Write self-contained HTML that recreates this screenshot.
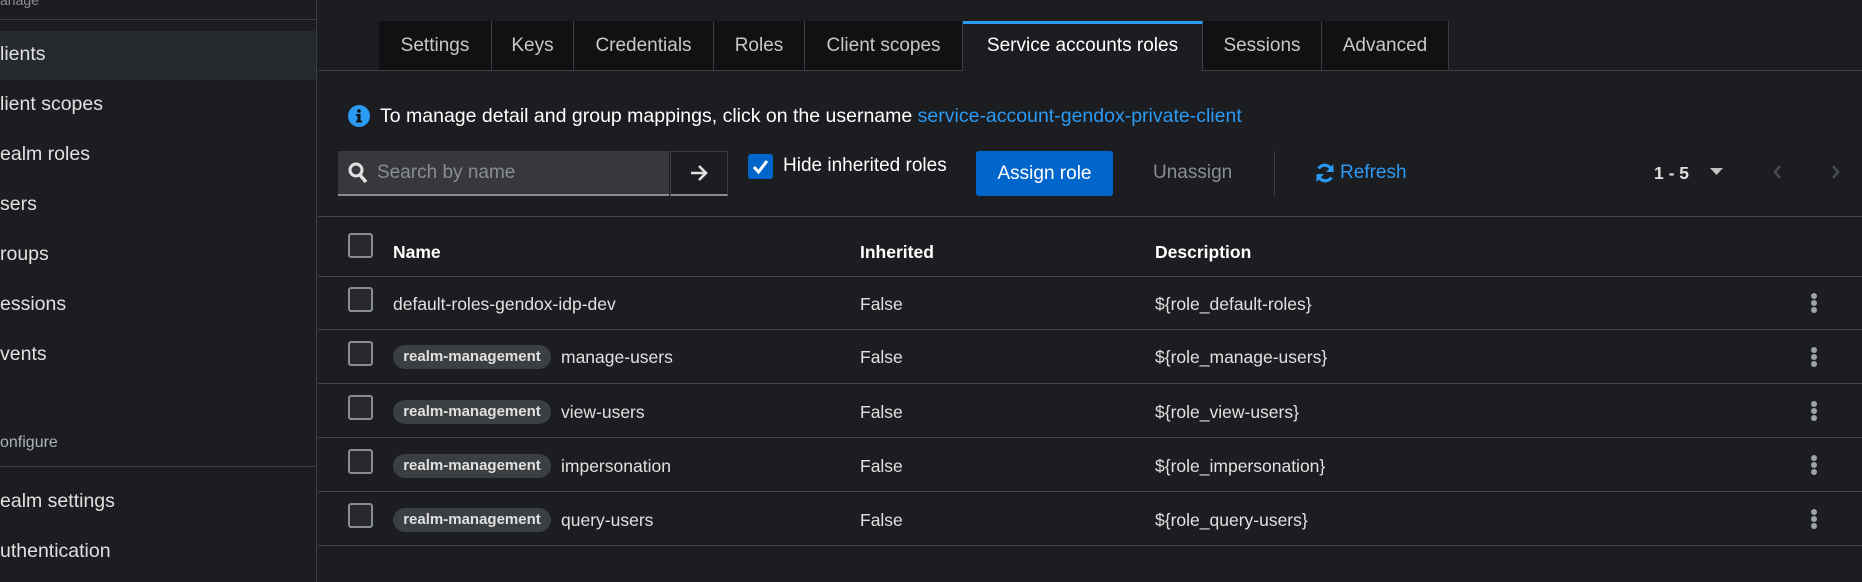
<!DOCTYPE html>
<html><head><meta charset="utf-8"><style>
*{box-sizing:border-box;margin:0;padding:0}
body{width:1862px;height:582px;background:#1b1d21;color:#e0e0e0;font-family:"Liberation Sans",sans-serif;position:relative;overflow:hidden}
.a{position:absolute;white-space:nowrap}
.side{position:absolute;left:0;top:0;width:317px;height:582px;background:#1b1d21;border-right:1px solid #3c3f42}
.nav{position:absolute;left:0;font-size:19.5px;color:#e0e0e0}
.hl{position:absolute;left:0;width:316px;height:1px;background:#3c3f42}
.tab{position:absolute;top:21px;height:49px;background:#0f1113;border-right:1px solid #3c3f42;font-size:19px;color:#c8c8c8;text-align:center;line-height:49px}
.cb{position:absolute;width:25px;height:25px;border:2px solid #8a8d90;border-radius:3px;background:#26282d}
.line{position:absolute;left:318px;right:0;height:1px;background:#444548}
.td{position:absolute;font-size:17.5px;color:#e0e0e0}
.chip{position:absolute;left:393px;height:24px;width:158px;text-align:center;border-radius:12px;background:#3c3f42;font-size:15px;font-weight:bold;color:#e0e0e0;line-height:24px}
.keb{position:absolute;left:1811px;width:6px}
.keb i{display:block;width:6px;height:6px;border-radius:3px;background:#a0a3a6;margin-bottom:1px}
</style></head><body>
<div class="side">
<div class="a" style="left:0;top:-8px;font-size:14px;color:#8a8d90">anage</div>
<div class="hl" style="top:19px"></div>
<div style="position:absolute;left:0;top:31px;width:316px;height:49px;background:#26292d"></div>
<div class="nav" style="top:43px">lients</div>
<div class="nav" style="top:93px">lient scopes</div>
<div class="nav" style="top:143px">ealm roles</div>
<div class="nav" style="top:193px">sers</div>
<div class="nav" style="top:243px">roups</div>
<div class="nav" style="top:293px">essions</div>
<div class="nav" style="top:343px">vents</div>
<div class="nav" style="top:434px;font-size:16px;color:#b0b3b6">onfigure</div>
<div class="hl" style="top:466px"></div>
<div class="nav" style="top:490px">ealm settings</div>
<div class="nav" style="top:540px">uthentication</div>
</div>

<div class="tab" style="left:379px;width:113px;border-left:0">Settings</div>
<div class="tab" style="left:492px;width:82px">Keys</div>
<div class="tab" style="left:574px;width:140px">Credentials</div>
<div class="tab" style="left:714px;width:91px">Roles</div>
<div class="tab" style="left:805px;width:158px">Client scopes</div>
<div class="tab" style="left:963px;width:240px;background:#1b1d21;color:#fff;border-top:3px solid #2b9af3;line-height:43px;height:50px;z-index:2">Service accounts roles</div>
<div class="tab" style="left:1203px;width:119px">Sessions</div>
<div class="tab" style="left:1322px;width:127px">Advanced</div>
<div class="line" style="top:70px;background:#3c3f42"></div>

<svg class="a" style="left:348px;top:105px" width="22" height="22" viewBox="0 0 22 22"><circle cx="11" cy="11" r="11" fill="#2b9af3"/><circle cx="11" cy="6" r="1.8" fill="#111"/><rect x="9.5" y="9" width="3" height="8" fill="#111"/><rect x="8" y="9" width="4" height="2" fill="#111"/><rect x="8" y="15.5" width="6" height="2" fill="#111"/></svg>
<div class="a" style="left:380px;top:105px;font-size:19.5px;color:#fff">To manage detail and group mappings, click on the username <span style="color:#2b9af3">service-account-gendox-private-client</span></div>

<div style="position:absolute;left:338px;top:151px;width:331px;height:45px;background:#36383c;border-bottom:2px solid #8a8d90"></div>
<svg class="a" style="left:348px;top:162px" width="20" height="22" viewBox="0 0 20 22"><circle cx="8" cy="8" r="6" fill="none" stroke="#e0e0e0" stroke-width="3"/><line x1="12" y1="13" x2="18" y2="20" stroke="#e0e0e0" stroke-width="3.5"/></svg>
<div class="a" style="left:377px;top:162px;font-size:19px;color:#8a8d90">Search by name</div>
<div style="position:absolute;left:670px;top:151px;width:58px;height:45px;background:#1b1d21;border:1px solid #3c3f42;border-bottom:2px solid #8a8d90"></div>
<svg class="a" style="left:689px;top:164px" width="20" height="18" viewBox="0 0 20 18"><path d="M2 9H17M10 2L17 9L10 16" fill="none" stroke="#e0e0e0" stroke-width="2.6"/></svg>
<div style="position:absolute;left:748px;top:154px;width:25px;height:25px;background:#0066cc;border-radius:3px"></div>
<svg class="a" style="left:751px;top:157px" width="19" height="19" viewBox="0 0 19 19"><path d="M3 10L7.5 15L16 4" fill="none" stroke="#fff" stroke-width="3"/></svg>
<div class="a" style="left:783px;top:155px;font-size:19px;color:#fff">Hide inherited roles</div>
<div style="position:absolute;left:976px;top:151px;width:137px;height:45px;background:#0066cc;border-radius:3px;color:#fff;font-size:19px;text-align:center;line-height:45px">Assign role</div>
<div class="a" style="left:1153px;top:162px;font-size:19px;color:#8a8d90">Unassign</div>
<div style="position:absolute;left:1274px;top:151px;width:1px;height:45px;background:#3c3f42"></div>
<svg class="a" style="left:1314px;top:162px" width="22" height="22" viewBox="0 0 22 22"><path d="M18 9A7.5 7.5 0 0 0 4.5 6.5M4 13A7.5 7.5 0 0 0 17.5 15.5" fill="none" stroke="#2b9af3" stroke-width="3.2"/><path d="M19.5 2V10H12Z M2.5 20V12H10Z" fill="#2b9af3"/></svg>
<div class="a" style="left:1340px;top:162px;font-size:19px;color:#2b9af3">Refresh</div>
<div class="a" style="left:1654px;top:163px;font-size:17.5px;font-weight:bold;color:#e0e0e0">1 - 5</div>
<svg class="a" style="left:1710px;top:168px" width="13" height="8"><path d="M0 0H13L6.5 7Z" fill="#c0c0c0"/></svg>
<svg class="a" style="left:1772px;top:164px" width="10" height="16"><path d="M8 2L3 8L8 14" fill="none" stroke="#4a4d50" stroke-width="2.5"/></svg>
<svg class="a" style="left:1831px;top:164px" width="10" height="16"><path d="M2 2L7 8L2 14" fill="none" stroke="#4a4d50" stroke-width="2.5"/></svg>
<div class="line" style="top:216px"></div>

<div class="cb" style="left:348px;top:233px"></div>
<div class="td" style="left:393px;top:242px;font-weight:bold;color:#fff">Name</div>
<div class="td" style="left:860px;top:242px;font-weight:bold;color:#fff">Inherited</div>
<div class="td" style="left:1155px;top:242px;font-weight:bold;color:#fff">Description</div>
<div class="line" style="top:276px"></div>

<div class="cb" style="left:348px;top:287px"></div>
<div class="td" style="left:393px;top:294px">default-roles-gendox-idp-dev</div>
<div class="td" style="left:860px;top:294px">False</div>
<div class="td" style="left:1155px;top:294px">${role_default-roles}</div>
<div class="keb" style="top:293px"><i></i><i></i><i></i></div>
<div class="line" style="top:329px"></div>

<div class="cb" style="left:348px;top:341px"></div>
<div class="chip" style="top:345px">realm-management</div>
<div class="td" style="left:561px;top:347px">manage-users</div>
<div class="td" style="left:860px;top:347px">False</div>
<div class="td" style="left:1155px;top:347px">${role_manage-users}</div>
<div class="keb" style="top:347px"><i></i><i></i><i></i></div>
<div class="line" style="top:383px"></div>

<div class="cb" style="left:348px;top:395px"></div>
<div class="chip" style="top:400px">realm-management</div>
<div class="td" style="left:561px;top:402px">view-users</div>
<div class="td" style="left:860px;top:402px">False</div>
<div class="td" style="left:1155px;top:402px">${role_view-users}</div>
<div class="keb" style="top:401px"><i></i><i></i><i></i></div>
<div class="line" style="top:437px"></div>

<div class="cb" style="left:348px;top:449px"></div>
<div class="chip" style="top:454px">realm-management</div>
<div class="td" style="left:561px;top:456px">impersonation</div>
<div class="td" style="left:860px;top:456px">False</div>
<div class="td" style="left:1155px;top:456px">${role_impersonation}</div>
<div class="keb" style="top:455px"><i></i><i></i><i></i></div>
<div class="line" style="top:491px"></div>

<div class="cb" style="left:348px;top:503px"></div>
<div class="chip" style="top:508px">realm-management</div>
<div class="td" style="left:561px;top:510px">query-users</div>
<div class="td" style="left:860px;top:510px">False</div>
<div class="td" style="left:1155px;top:510px">${role_query-users}</div>
<div class="keb" style="top:509px"><i></i><i></i><i></i></div>
<div class="line" style="top:545px"></div>
</body></html>
